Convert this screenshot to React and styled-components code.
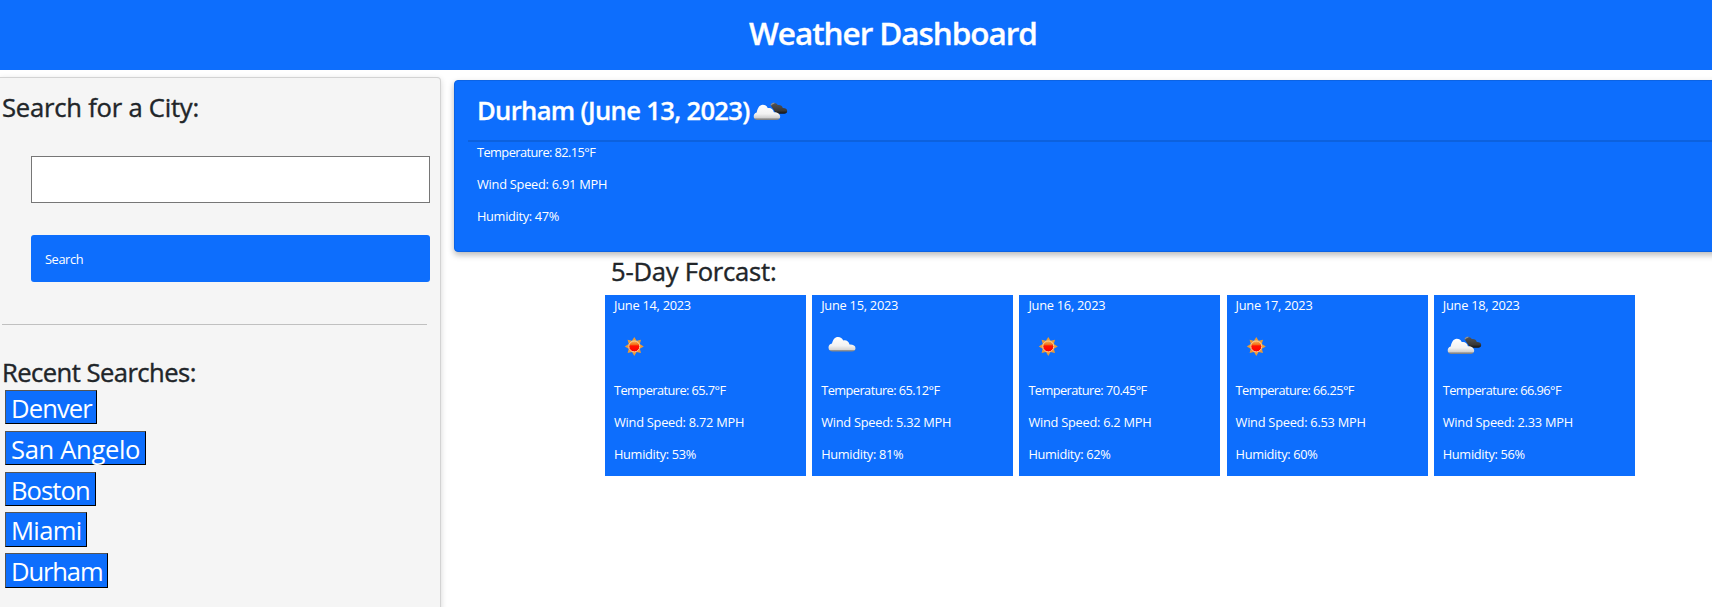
import React from "react";
import styled, { createGlobalStyle } from "styled-components";

const BLUE = "#0d6efd";

const GlobalStyle = createGlobalStyle`
  *, *::before, *::after { box-sizing: border-box; }
  html, body { margin: 0; height: 100%; overflow: hidden; background: #fff; }
  #root { height: 100%; overflow: hidden; }
  body {
    font-family: "Open Sans", "Noto Sans", sans-serif;
    font-size: 12.8px;
    line-height: 19.2px;
    color: #212529;
  }
  h1, h2, h3, p, ul { margin: 0; padding: 0; }
  button, input { font-family: inherit; }
`;

const Page = styled.div`
  height: 607px;
  overflow: hidden;
  display: flex;
  flex-direction: column;
`;

const Header = styled.header`
  flex: none;
  height: 70px;
  padding: 14px 0 0 74px;
  background: ${BLUE};
  color: #fff;
  text-align: center;
`;

const Title = styled.h1`
  font-size: 31.5px;
  font-weight: 600;
  line-height: 38px;
  letter-spacing: -1.05px;
  -webkit-text-stroke: 0.3px currentColor;
`;

const Columns = styled.div`
  flex: 1;
  min-height: 0;
  display: flex;
  align-items: flex-start;
  gap: 13px;
`;

const Sidebar = styled.aside`
  flex: none;
  width: 441px;
  height: 560px;
  margin-top: 7px;
  padding: 14px 10px 0 2px;
  display: flex;
  flex-direction: column;
  background: #f5f5f5;
  border: 1px solid #d3d3d3;
  border-left: 0;
  border-radius: 0 4px 4px 0;
  box-shadow: 0 2px 6px rgba(0, 0, 0, 0.16);
`;

const Heading = styled.h2`
  font-size: 25.6px;
  font-weight: 500;
  line-height: 31px;
  white-space: nowrap;
  letter-spacing: ${(p) => p.$spacing}px;
  -webkit-text-stroke: 0.4px currentColor;
`;

const SearchForm = styled.form`
  display: flex;
  flex-direction: column;
  gap: 32px;
  margin: 33px 0 0 29px;
`;

const CityInput = styled.input`
  width: 399px;
  height: 47px;
  padding: 0 14px;
  border: 1px solid #767676;
  border-radius: 0;
  background: #fff;
  outline: none;
`;

const SearchButton = styled.button`
  width: 399px;
  height: 47px;
  padding: 0 14px;
  border: 0;
  border-radius: 3px;
  background: ${BLUE};
  color: #fff;
  text-align: left;
  font-size: 12.8px;
  letter-spacing: -0.4px;
`;

const Divider = styled.hr`
  width: 425px;
  height: 1px;
  margin: 42px 0 32px;
  border: 0;
  background: #c0c0c0;
`;

const RecentList = styled.div`
  display: flex;
  flex-direction: column;
  align-items: flex-start;
  gap: 6.4px;
  margin: 2px 0 0 3px;
`;

const RecentButton = styled.button`
  height: 34.4px;
  width: ${(p) => p.$width}px;
  padding: 0 0 0 5px;
  border: 1px solid;
  border-color: #555 #000 #000 #555;
  background: ${BLUE};
  color: #fff;
  font-size: 25.6px;
  line-height: 36px;
  letter-spacing: ${(p) => p.$spacing}px;
  text-align: left;
  white-space: nowrap;
`;

const Main = styled.main`
  flex: 1;
  min-width: 0;
  padding-top: 10px;
`;

const CurrentCard = styled.section`
  height: 172px;
  margin-right: -20px;
  padding: 15px 0 0 13px;
  background: ${BLUE};
  color: #fff;
  border: 1px solid #0c63e4;
  border-radius: 4px;
  box-shadow: 0 3px 6px rgba(0, 0, 0, 0.28);
`;

const CurrentTitle = styled.div`
  display: flex;
  align-items: center;
  height: 46px;
  margin-bottom: 1px;
  padding: 0 0 15px 9px;
  border-bottom: 2px solid #0c61de;

  ${Heading} {
    font-weight: 600;
    -webkit-text-stroke: 0.3px currentColor;
  }
`;

const Stats = styled.div`
  display: flex;
  flex-direction: column;
  gap: 12.8px;
  padding-left: 9px;
`;

const Stat = styled.p`
  white-space: nowrap;
  letter-spacing: ${(p) => p.$spacing}px;
`;

const Forecast = styled.section`
  padding: 4px 0 0 151px;
`;

const ForecastHeading = styled(Heading)`
  padding-left: 6px;
`;

const Days = styled.div`
  display: flex;
  gap: 6.2px;
  margin-top: 8px;
`;

const DayCard = styled.article`
  flex: none;
  width: 201px;
  height: 181px;
  padding-top: 1px;
  background: ${BLUE};
  color: #fff;
`;

const DayDate = styled(Stat)`
  padding-left: 9px;
`;

const IconSlot = styled.div`
  height: 50px;
  margin: 6px 0 10px 4px;

  svg { display: block; }
`;

const TitleIcon = styled.div`
  height: 50px;
  margin: 3px 0 0 -6px;

  svg { display: block; }
`;

function SunIcon({ id }) {
  return (
    <svg width="50" height="50" viewBox="0 0 50 50">
      <defs>
        <linearGradient id={id} x1="0" y1="0" x2="0" y2="1">
          <stop offset="0" stopColor="#f5b95a" />
          <stop offset="0.35" stopColor="#f56a14" />
          <stop offset="0.45" stopColor="#ff1200" />
          <stop offset="1" stopColor="#ff0000" />
        </linearGradient>
      </defs>
      <g transform="translate(0.3 0.4)">
        <path
          fill="#eb9a35"
          d="M25 15.500L27.300 19.450L31.700 18.300L30.550 22.700L34.500 25L30.550 27.300L31.700 31.700L27.300 30.550L25 34.500L22.700 30.550L18.300 31.700L19.450 27.300L15.500 25L19.450 22.700L18.300 18.300L22.700 19.450Z"
        />
        <circle cx="25" cy="25" r="5.5" fill={`url(#${id})`} stroke="#f8d3a0" strokeWidth="1" />
      </g>
    </svg>
  );
}

function CloudIcon({ id }) {
  return (
    <svg width="50" height="50" viewBox="0 0 50 50">
      <defs>
        <linearGradient id={id} x1="0" y1="0" x2="0" y2="1">
          <stop offset="0" stopColor="#ffffff" />
          <stop offset="0.6" stopColor="#f2f2f2" />
          <stop offset="0.88" stopColor="#d5d5d5" />
          <stop offset="0.94" stopColor="#858585" />
          <stop offset="1" stopColor="#858585" />
        </linearGradient>
      </defs>
      <path
        fill={`url(#${id})`}
        d="M16.500 30.500c-2.200 0-4-1.600-4-4 0-2.200 1.500-3.700 3.500-4 .8-3.800 3-6.500 6-6.500 2.500 0 4.300 1.400 5.200 3.500 3.200-.7 5.800 1.200 6.300 4 3.400-.2 6 1.100 6 3.700 0 2-1.500 3.300-3.500 3.300z"
      />
    </svg>
  );
}

function BrokenCloudsIcon({ id }) {
  return (
    <svg width="50" height="50" viewBox="0 0 50 50">
      <defs>
        <linearGradient id={id} x1="0" y1="0" x2="0" y2="1">
          <stop offset="0" stopColor="#ffffff" />
          <stop offset="0.6" stopColor="#f2f2f2" />
          <stop offset="0.86" stopColor="#d0d0d0" />
          <stop offset="0.93" stopColor="#858585" />
          <stop offset="1" stopColor="#858585" />
        </linearGradient>
        <linearGradient id={`${id}-back`} x1="0" y1="0" x2="0" y2="1">
          <stop offset="0" stopColor="#555" />
          <stop offset="0.7" stopColor="#383838" />
          <stop offset="1" stopColor="#111" />
        </linearGradient>
      </defs>
      <g transform="translate(1.2 0)">
        <path
          fill={`url(#${id}-back)`}
          d="M25.500 18.500c.5-1.500 1.800-2.500 3.500-2.500 1.600 0 2.900.8 3.600 2.100 2.400-.5 4.500.7 5 2.900 2.600-.1 4.400 1 4.400 3 0 1.700-1.200 2.800-3 2.800h-8z"
        />
        <path d="M25.700 18.300c.8-1.500 1.900-2.100 3.500-2.100" fill="none" stroke="#909090" strokeWidth="1.2" />
        <path
          fill={`url(#${id})`}
          d="M12 33c-2 0-3.500-1.500-3.500-3.600 0-2 1-3.600 3-4 .8-4 2.800-7.600 6-7.600 2.400 0 4.100 1.100 5 3.300 3-.7 5.700.9 6.200 4.200 3.800-.1 6.300 1.700 6.300 4.500 0 2-1.500 3.200-3.300 3.200z"
        />
      </g>
    </svg>
  );
}

const icons = { sun: SunIcon, cloud: CloudIcon, broken: BrokenCloudsIcon };

const recent = [
  { name: "Denver", width: 92, spacing: -0.9 },
  { name: "San Angelo", width: 141, spacing: -0.35 },
  { name: "Boston", width: 91, spacing: -0.95 },
  { name: "Miami", width: 82, spacing: -0.65 },
  { name: "Durham", width: 103, spacing: -1.15 },
];

const days = [
  { date: "June 14, 2023", icon: "sun", temp: "65.7", wind: "8.72", humidity: 53 },
  { date: "June 15, 2023", icon: "cloud", temp: "65.12", wind: "5.32", humidity: 81 },
  { date: "June 16, 2023", icon: "sun", temp: "70.45", wind: "6.2", humidity: 62 },
  { date: "June 17, 2023", icon: "sun", temp: "66.25", wind: "6.53", humidity: 60 },
  { date: "June 18, 2023", icon: "broken", temp: "66.96", wind: "2.33", humidity: 56 },
];

function WeatherStats({ temp, wind, humidity }) {
  return (
    <Stats>
      <Stat $spacing={-0.57}>{`Temperature: ${temp}°F`}</Stat>
      <Stat $spacing={-0.25}>{`Wind Speed: ${wind} MPH`}</Stat>
      <Stat $spacing={-0.33}>{`Humidity: ${humidity}%`}</Stat>
    </Stats>
  );
}

export default function App() {
  return (
    <>
      <GlobalStyle />
      <Page>
        <Header>
          <Title>Weather Dashboard</Title>
        </Header>
        <Columns>
          <Sidebar>
            <Heading $spacing={-0.22}>Search for a City:</Heading>
            <SearchForm onSubmit={(e) => e.preventDefault()}>
              <CityInput type="text" aria-label="City" />
              <SearchButton type="submit">Search</SearchButton>
            </SearchForm>
            <Divider />
            <Heading $spacing={-0.55}>Recent Searches:</Heading>
            <RecentList>
              {recent.map((city) => (
                <RecentButton key={city.name} $width={city.width} $spacing={city.spacing}>
                  {city.name}
                </RecentButton>
              ))}
            </RecentList>
          </Sidebar>
          <Main>
            <CurrentCard>
              <CurrentTitle>
                <Heading $spacing={-0.67}>Durham (June 13, 2023)</Heading>
                <TitleIcon>
                  <BrokenCloudsIcon id="current" />
                </TitleIcon>
              </CurrentTitle>
              <WeatherStats temp="82.15" wind="6.91" humidity={47} />
            </CurrentCard>
            <Forecast>
              <ForecastHeading $spacing={-0.24}>5-Day Forcast:</ForecastHeading>
              <Days>
                {days.map((day, i) => {
                  const Icon = icons[day.icon];
                  return (
                    <DayCard key={day.date}>
                      <DayDate $spacing={-0.25}>{day.date}</DayDate>
                      <IconSlot>
                        <Icon id={`day-${i}`} />
                      </IconSlot>
                      <WeatherStats temp={day.temp} wind={day.wind} humidity={day.humidity} />
                    </DayCard>
                  );
                })}
              </Days>
            </Forecast>
          </Main>
        </Columns>
      </Page>
    </>
  );
}
